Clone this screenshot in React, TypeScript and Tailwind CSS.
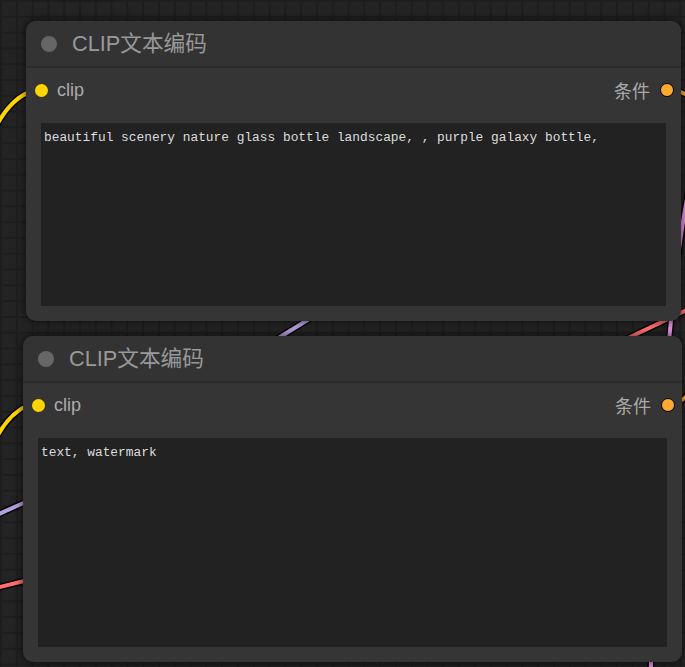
import React from 'react';

interface NodeProps {
  left: number;
  top: number;
  width: number;
  height: number;
  title: string;
  text: string;
}

// wires drawn on the canvas behind the nodes
const wires: { d: string; color: string }[] = [
  { d: 'M -10 140 Q 6 100 32 91', color: '#ffd500' },
  { d: 'M -10 452 Q 4 416 28 405', color: '#ffd500' },
  { d: 'M -8 517 L 28 501', color: '#b39ddb' },
  { d: 'M -8 589 L 28 580', color: '#ff6e6e' },
  { d: 'M 272 342 L 314 316', color: '#b39ddb' },
  { d: 'M 620 342 L 695 306', color: '#ff6e6e' },
  { d: 'M 692 175 C 672 260, 660 420, 650 690', color: '#e38de3' },
  { d: 'M 667 90 C 680 90, 686 94, 700 102', color: '#ffa931' },
  { d: 'M 667 404 C 682 404, 688 396, 700 380', color: '#ffa931' },
];

function ClipNode({ left, top, width, height, title, text }: NodeProps) {
  return (
    <div
      className="absolute flex flex-col rounded-[10px] bg-[#353535] shadow-[0_0_6px_2px_rgba(0,0,0,0.45)]"
      style={{ left, top, width, height }}
    >
      <div className="flex h-[47px] shrink-0 items-center rounded-t-[10px] border-b-2 border-[#2c2c2c] bg-[#333333] pl-[15px]">
        <span className="h-[16px] w-[16px] rounded-full bg-[#666666]" />
        <span className="ml-[15px] font-['Liberation_Sans','Noto_Sans_CJK_SC',sans-serif] text-[21.7px] leading-none text-[#999999]">
          {title}
        </span>
      </div>
      <div className="flex h-[44px] shrink-0 items-center justify-between pl-[9px] pr-[7px]">
        <div className="flex items-center">
          <span className="h-[13px] w-[13px] rounded-full bg-[#ffd500]" />
          <span className="ml-[9px] font-['Liberation_Sans',sans-serif] text-[18px] leading-none text-[#aaaaaa]">clip</span>
        </div>
        <div className="flex items-center">
          <span className="font-['Noto_Sans_CJK_SC',sans-serif] text-[18px] leading-none text-[#aaaaaa]">条件</span>
          <span className="ml-[10px] h-[14px] w-[14px] rounded-full border-[1.5px] border-black bg-[#ffa931]" />
        </div>
      </div>
      <div className="mx-[15px] mb-[15px] mt-[11px] flex-1 bg-[#222222] px-[3px] pt-[7px]">
        <div className="whitespace-pre font-['Liberation_Mono',monospace] text-[12.85px] leading-[16px] text-[#dddddd]">
          {text}
        </div>
      </div>
    </div>
  );
}

export default function App() {
  return (
    <div className="relative h-[667px] w-[685px] overflow-hidden bg-[#232323] bg-[linear-gradient(#1d1d1d_2px,transparent_2px),linear-gradient(90deg,#1d1d1d_2px,transparent_2px)] bg-[size:15.8px_15.8px]">
      <svg className="absolute inset-0" width={685} height={667}>
        {wires.map((w, i) => (
          <path key={'b' + i} d={w.d} stroke="#000" strokeWidth={7} fill="none" strokeLinecap="round" opacity={0.85} />
        ))}
        {wires.map((w, i) => (
          <path key={'c' + i} d={w.d} stroke={w.color} strokeWidth={4} fill="none" />
        ))}
      </svg>
      <ClipNode
        left={26}
        top={21}
        width={655}
        height={300}
        title="CLIP文本编码"
        text="beautiful scenery nature glass bottle landscape, , purple galaxy bottle,"
      />
      <ClipNode left={23} top={336} width={659} height={326} title="CLIP文本编码" text="text, watermark" />
    </div>
  );
}
